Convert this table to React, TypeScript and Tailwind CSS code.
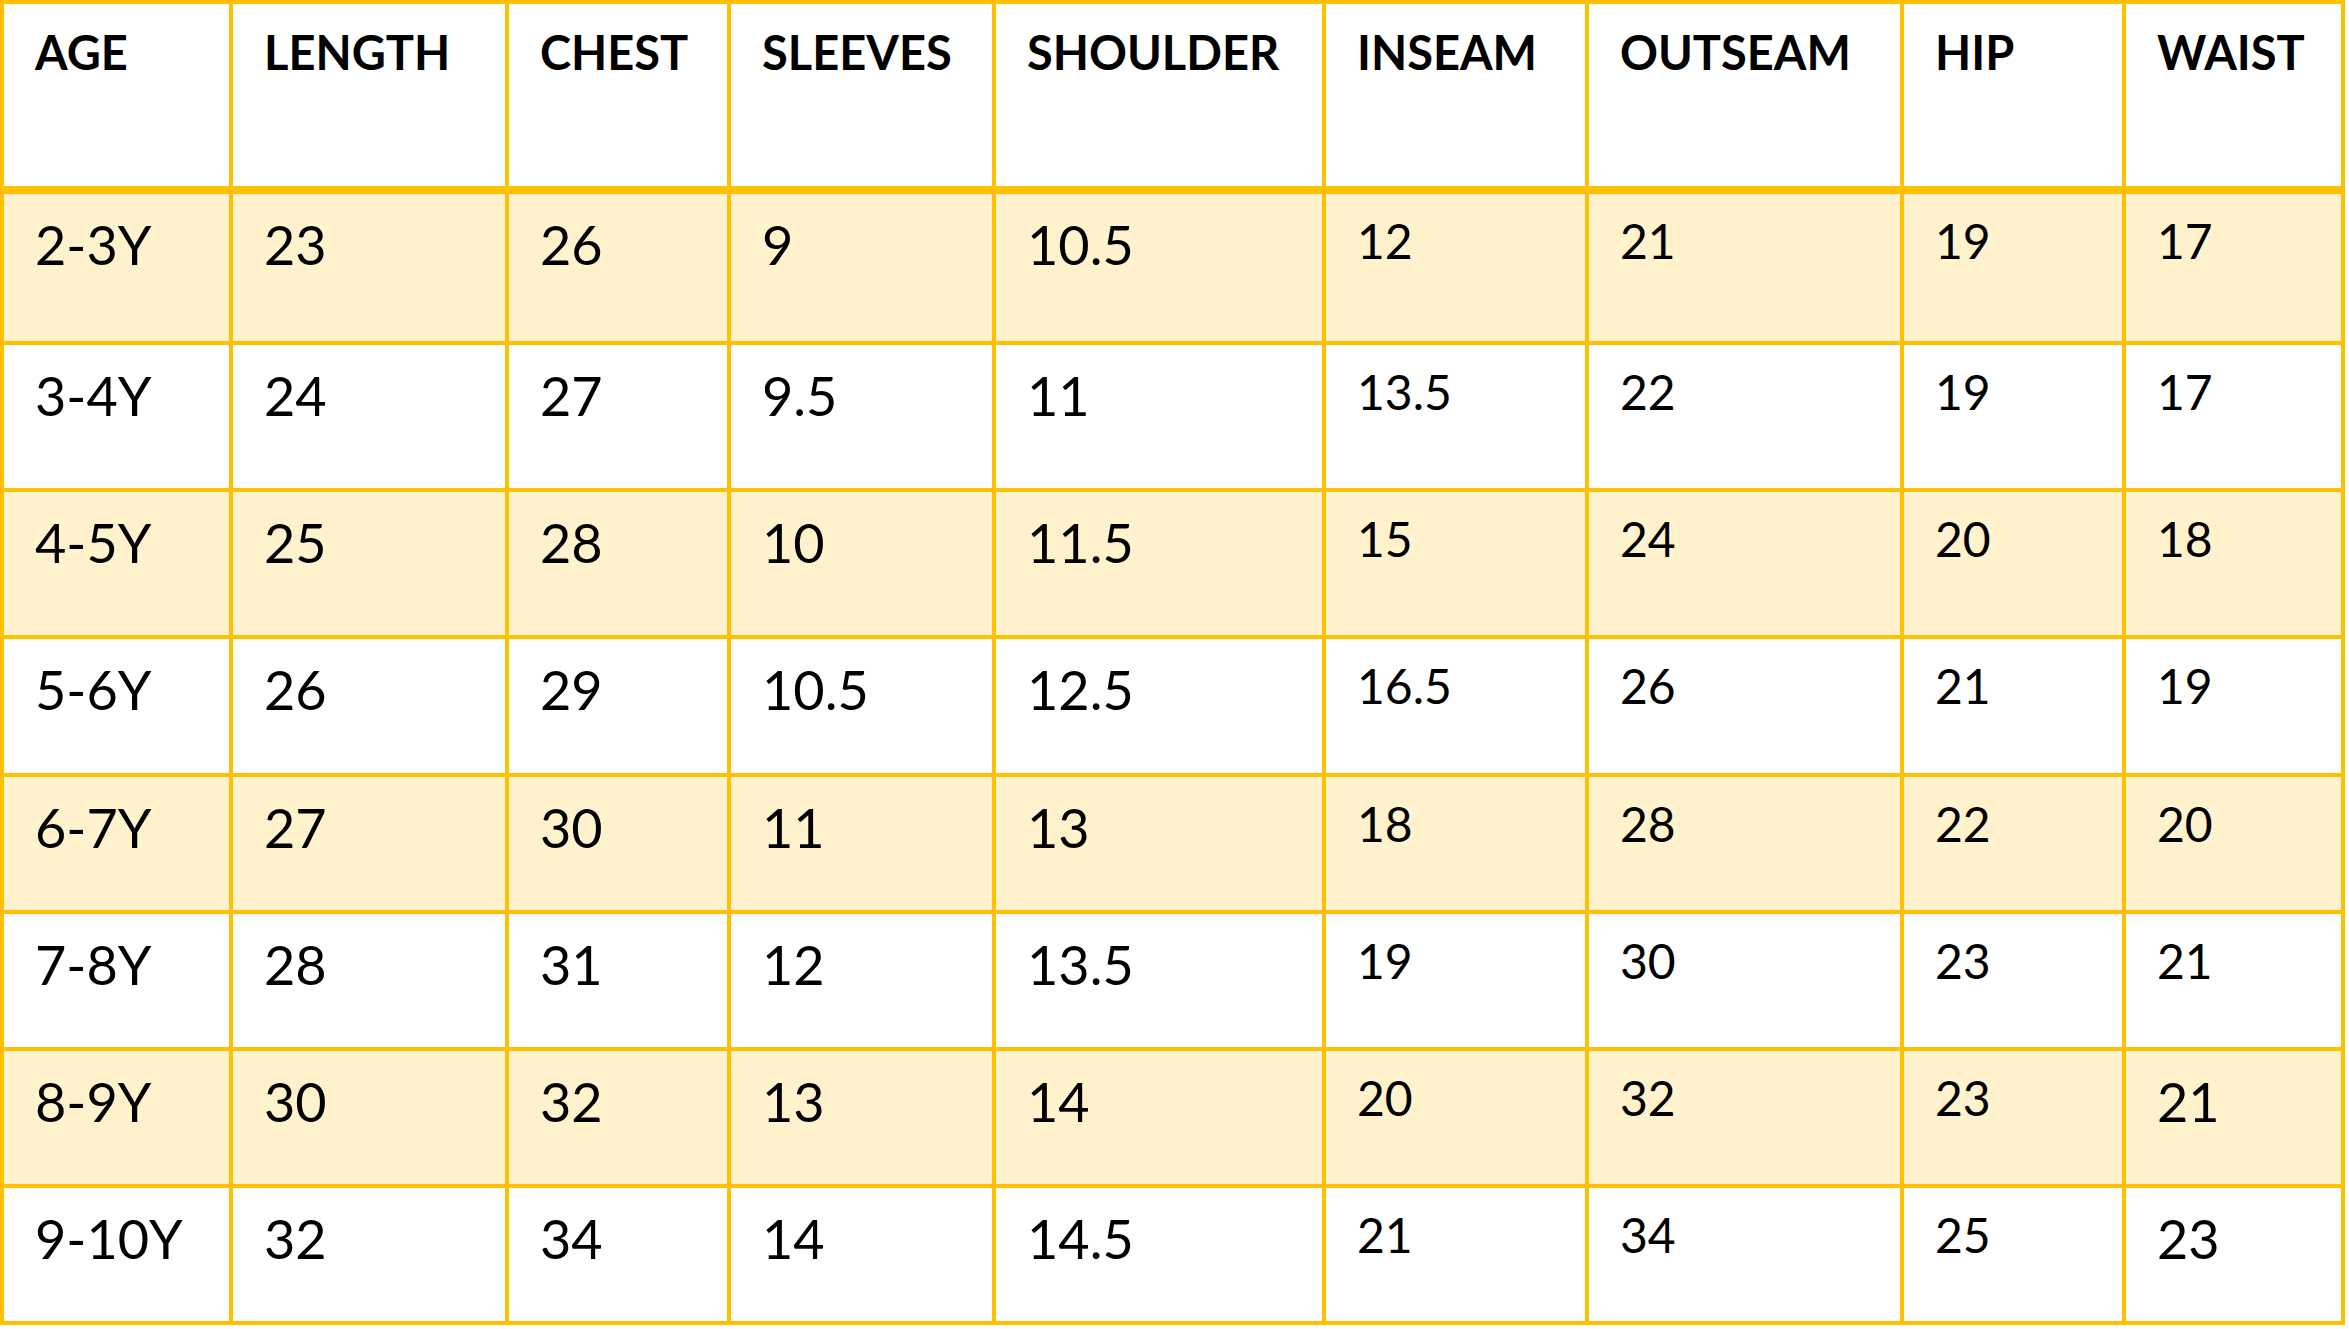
const headers = ["AGE", "LENGTH", "CHEST", "SLEEVES", "SHOULDER", "INSEAM", "OUTSEAM", "HIP", "WAIST"];

// small = cells printed in the smaller type size
const rows: { cells: string[]; small: number[]; h: string }[] = [
  { cells: ["2-3Y", "23", "26", "9", "10.5", "12", "21", "19", "17"], small: [5, 6, 7, 8], h: "h-[147px]" },
  { cells: ["3-4Y", "24", "27", "9.5", "11", "13.5", "22", "19", "17"], small: [5, 6, 7, 8], h: "h-[143px]" },
  { cells: ["4-5Y", "25", "28", "10", "11.5", "15", "24", "20", "18"], small: [5, 6, 7, 8], h: "h-[143px]" },
  { cells: ["5-6Y", "26", "29", "10.5", "12.5", "16.5", "26", "21", "19"], small: [5, 6, 7, 8], h: "h-[134px]" },
  { cells: ["6-7Y", "27", "30", "11", "13", "18", "28", "22", "20"], small: [5, 6, 7, 8], h: "h-[133px]" },
  { cells: ["7-8Y", "28", "31", "12", "13.5", "19", "30", "23", "21"], small: [5, 6, 7, 8], h: "h-[133px]" },
  { cells: ["8-9Y", "30", "32", "13", "14", "20", "32", "23", "21"], small: [5, 6, 7], h: "h-[133px]" },
  { cells: ["9-10Y", "32", "34", "14", "14.5", "21", "34", "25", "23"], small: [5, 6, 7], h: "h-[133px]" },
];

export default function App() {
  return (
    <div className="w-[2349px] h-[1329px] bg-white" style={{ fontFamily: "Lato, 'Open Sans', sans-serif" }}>
      <div className="grid w-[2345px] grid-cols-[225px_272px_218px_261px_326px_259px_311px_218px_215px] gap-[4px] bg-[#ffc000] p-[4px] text-black">
        {headers.map((h) => (
          <div key={h} className="h-[186px] border-b-[4px] border-[#ffc000] bg-white pl-[31px] pt-[25px] text-[47px] font-bold leading-none">
            {h}
          </div>
        ))}
        {rows.map((r, i) =>
          r.cells.map((c, j) => {
            const small = r.small.includes(j);
            return (
              <div
                key={i + "-" + j}
                className={
                  r.h +
                  " pl-[31px] leading-none " +
                  (i % 2 === 0 ? "bg-[#fff2cc] " : "bg-white ") +
                  (small ? "pt-[23px] text-[48px]" : "pt-[24px] text-[54px]")
                }
              >
                {c}
              </div>
            );
          })
        )}
      </div>
    </div>
  );
}
